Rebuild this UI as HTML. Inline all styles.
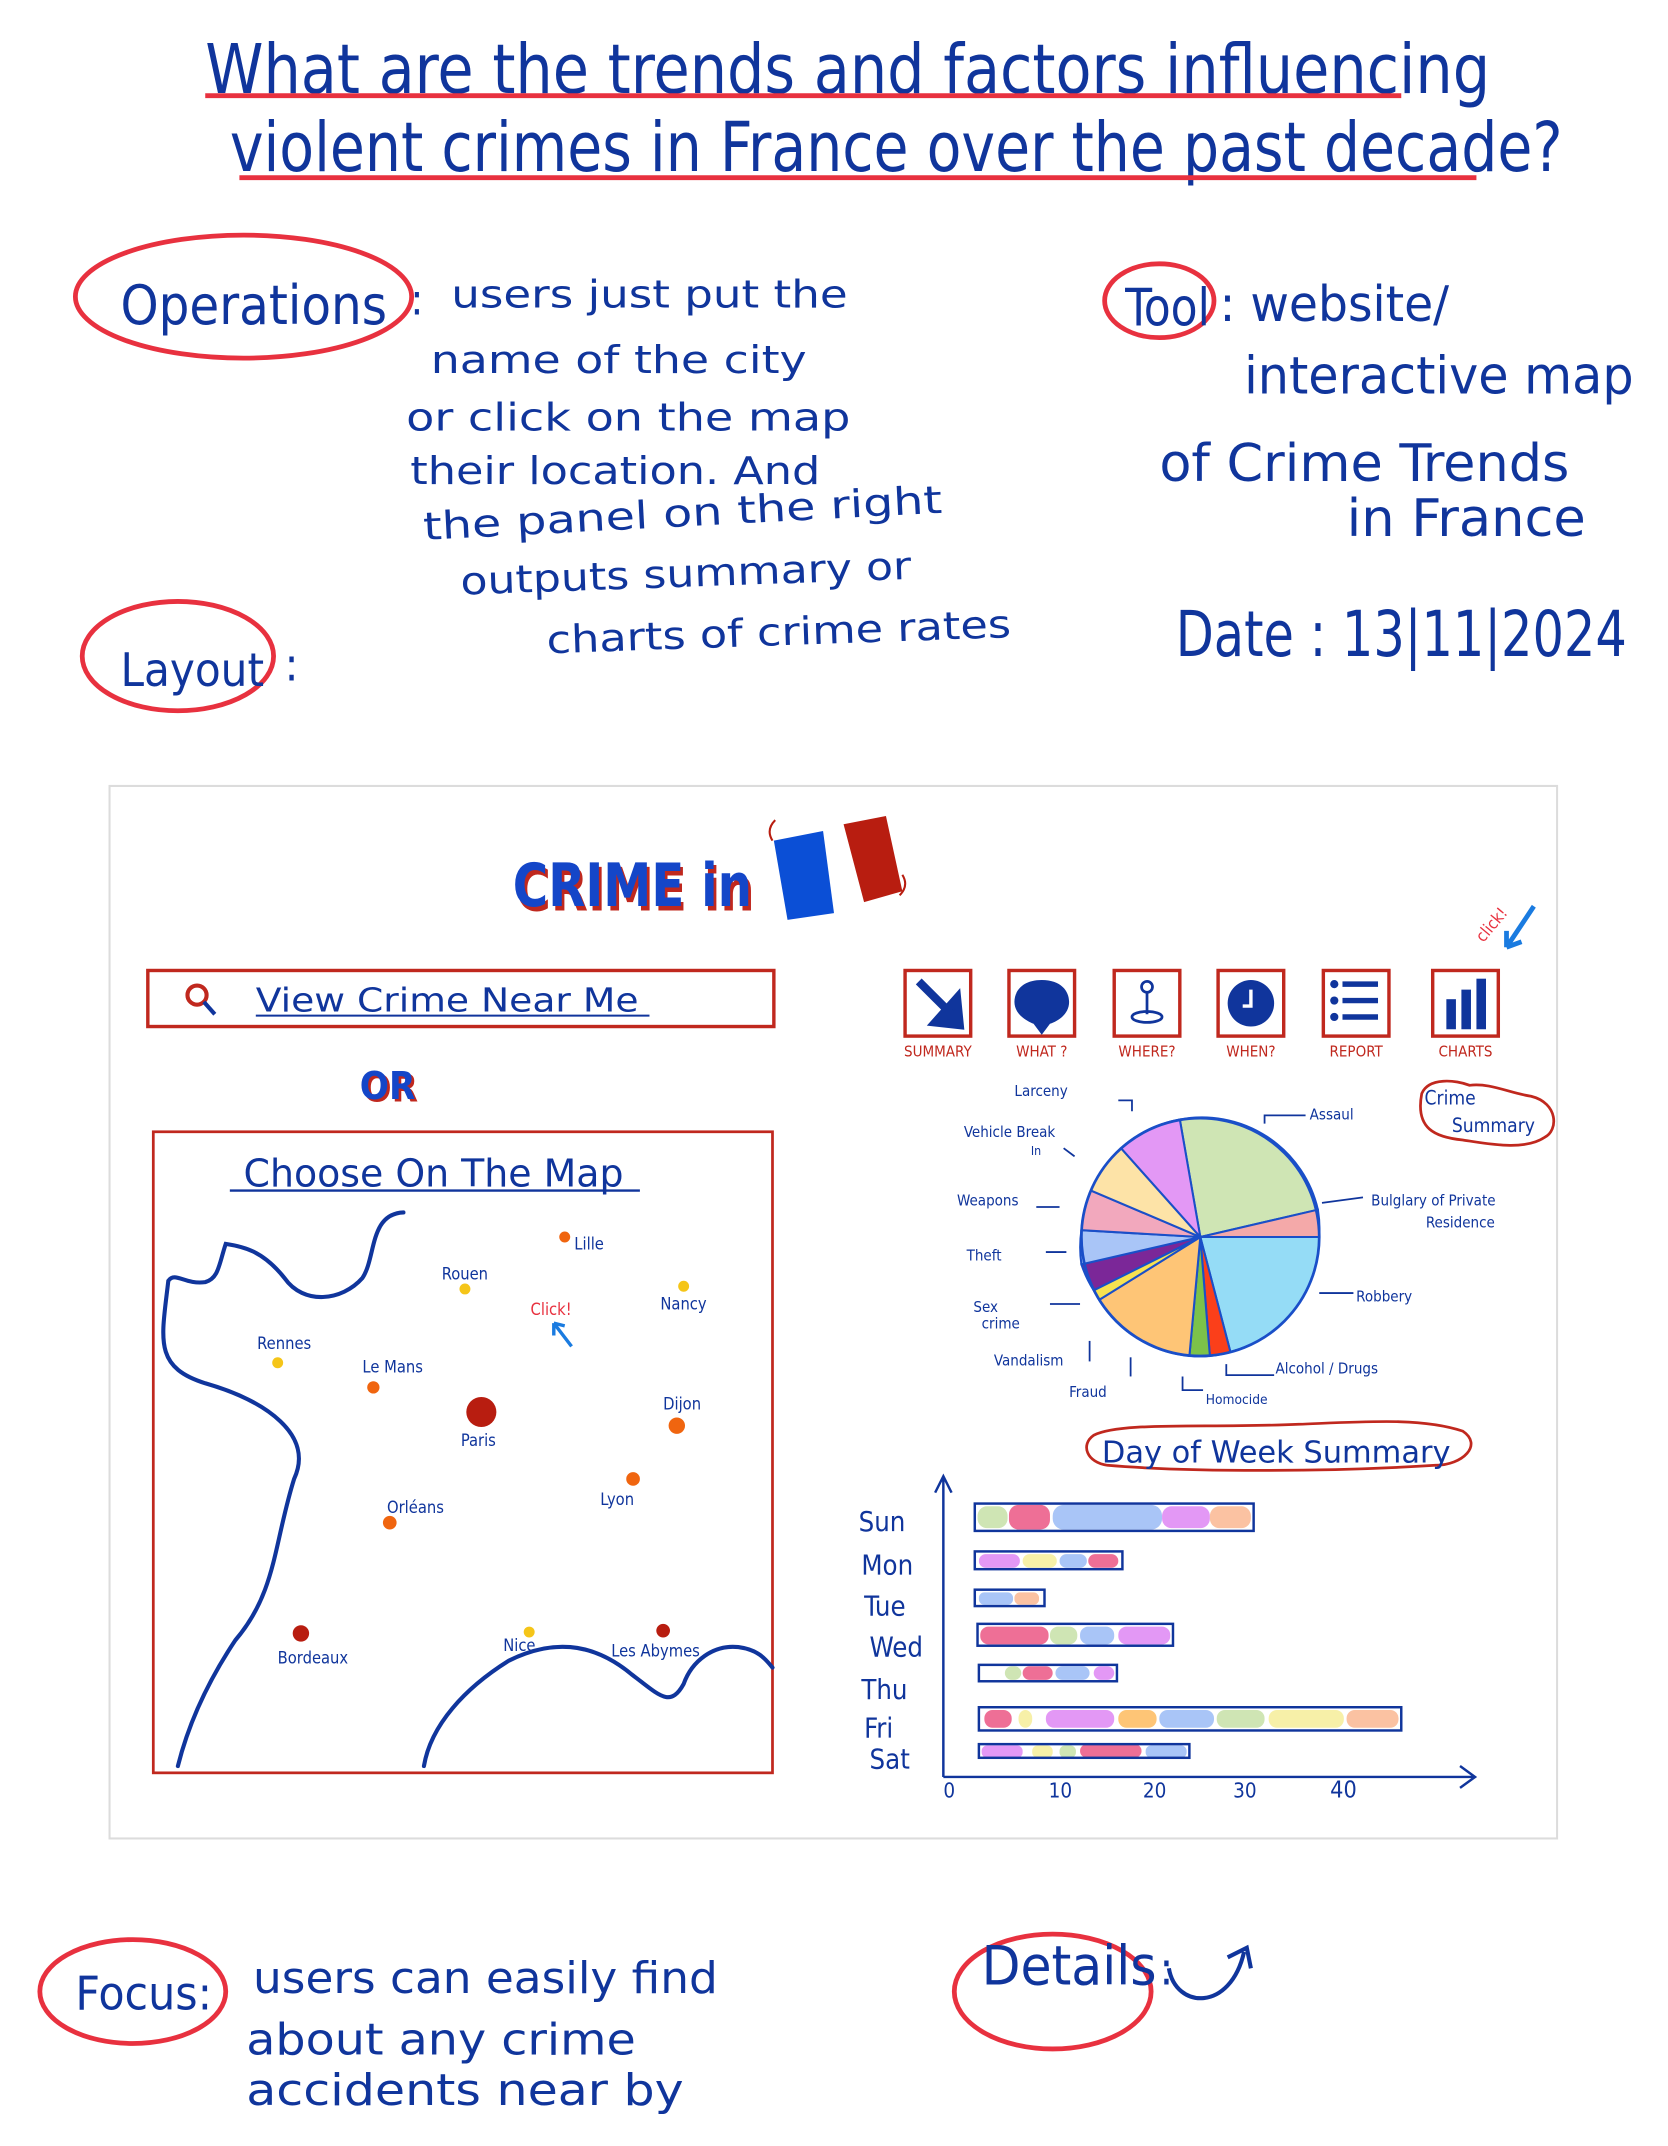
<!DOCTYPE html>
<html><head><meta charset="utf-8"><style>html,body{margin:0;padding:0;background:#fff}svg{display:block}</style></head>
<body>
<svg width="1668" height="2146" viewBox="0 0 1220 1570" xmlns="http://www.w3.org/2000/svg" font-family="'DejaVu Sans Condensed','Liberation Sans Narrow','Liberation Sans',sans-serif">
<g fill="#10359c">
<text x="150" y="68" font-size="50" textLength="940" lengthAdjust="spacingAndGlyphs">What are the trends and factors influencing</text>
<text x="168" y="125" font-size="50" textLength="975" lengthAdjust="spacingAndGlyphs">violent crimes in France over the past decade?</text>
</g>
<g stroke="#e8313f" stroke-width="3.5" fill="none">
<line x1="150" y1="70" x2="1025" y2="70"/><line x1="175" y1="130" x2="1080" y2="130"/>
<ellipse cx="178" cy="217" rx="123" ry="45"/>
<ellipse cx="848" cy="220" rx="40" ry="27"/>
<ellipse cx="130" cy="480" rx="70" ry="40"/>
<ellipse cx="97" cy="1457" rx="68" ry="38"/>
<ellipse cx="770" cy="1457" rx="72" ry="42"/>
</g>
<g fill="#10359c">
<text x="88" y="237" font-size="40" textLength="195" lengthAdjust="spacingAndGlyphs">Operations</text>
<text x="300" y="230" font-size="32">:</text>
<text x="330" y="225" font-size="28" textLength="290" lengthAdjust="spacingAndGlyphs">users just put the</text>
<text x="315" y="273" font-size="28" textLength="275" lengthAdjust="spacingAndGlyphs">name of the city</text>
<text x="297" y="315" font-size="28" textLength="325" lengthAdjust="spacingAndGlyphs">or click on the map</text>
<text x="300" y="354" font-size="28" textLength="300" lengthAdjust="spacingAndGlyphs">their location. And</text>
<text x="310" y="395" font-size="28" textLength="380" lengthAdjust="spacingAndGlyphs" transform="rotate(-3 310 395)">the panel on the right</text>
<text x="337" y="435" font-size="28" textLength="330" lengthAdjust="spacingAndGlyphs" transform="rotate(-2 337 435)">outputs summary or</text>
<text x="400" y="478" font-size="28" textLength="340" lengthAdjust="spacingAndGlyphs" transform="rotate(-2 400 478)">charts of crime rates</text>
<text x="823" y="238" font-size="38" textLength="62" lengthAdjust="spacingAndGlyphs">Tool</text>
<text x="892" y="235" font-size="36" textLength="168" lengthAdjust="spacingAndGlyphs">: website/</text>
<text x="910" y="288" font-size="38" textLength="285" lengthAdjust="spacingAndGlyphs">interactive map</text>
<text x="848" y="352" font-size="38" textLength="300" lengthAdjust="spacingAndGlyphs">of Crime Trends</text>
<text x="985" y="392" font-size="38" textLength="175" lengthAdjust="spacingAndGlyphs">in France</text>
<text x="860" y="480" font-size="46" textLength="330" lengthAdjust="spacingAndGlyphs">Date : 13|11|2024</text>
<text x="88" y="502" font-size="34" textLength="105" lengthAdjust="spacingAndGlyphs">Layout</text>
<text x="208" y="498" font-size="34">:</text>
</g>
<rect x="80" y="575" width="1059" height="770" fill="none" stroke="#dcdcdc" stroke-width="1.5"/>
<text x="377" y="666" font-size="44" font-weight="bold" fill="#c0281e" textLength="175" lengthAdjust="spacingAndGlyphs">CRIME in</text>
<text x="375" y="663" font-size="44" font-weight="bold" fill="#1446c8" textLength="175" lengthAdjust="spacingAndGlyphs">CRIME in</text>
<polygon points="566,615 602,608 610,668 576,673" fill="#0b4fd6"/>
<polygon points="617,603 648,597 660,652 632,660" fill="#b81d10"/>
<path d="M565,615 q-5,-8 2,-15 M660,640 q5,8 -2,15" stroke="#b81d10" stroke-width="1.5" fill="none"/>
<rect x="108" y="710" width="458" height="41" fill="none" stroke="#c0281e" stroke-width="2.5"/>
<circle cx="144" cy="728" r="7" fill="none" stroke="#c0281e" stroke-width="3"/>
<line x1="149" y1="733" x2="157" y2="742" stroke="#10359c" stroke-width="3"/>
<text x="187" y="740" font-size="24" fill="#10359c" textLength="280" lengthAdjust="spacingAndGlyphs">View Crime Near Me</text>
<line x1="187" y1="743" x2="475" y2="743" stroke="#10359c" stroke-width="1.5"/>
<text x="265" y="806" font-size="28" font-weight="bold" fill="#c0281e">OR</text>
<text x="263" y="804" font-size="28" font-weight="bold" fill="#1446c8">OR</text>
<rect x="112" y="828" width="453" height="469" fill="none" stroke="#c0281e" stroke-width="2"/>
<text x="178" y="868" font-size="28" fill="#10359c" textLength="278" lengthAdjust="spacingAndGlyphs">Choose On The Map</text>
<line x1="168" y1="871" x2="468" y2="871" stroke="#10359c" stroke-width="1.8"/>
<g stroke="#10359c" stroke-width="3" fill="none" stroke-linecap="round">
<path d="M295,887 C270,888 275,920 265,935 C250,952 222,955 208,935 C192,915 178,912 165,910 C160,925 160,935 150,938 C135,940 128,930 123,937 C118,980 112,1000 150,1012 C195,1025 230,1050 215,1082 C200,1130 202,1165 172,1200 C152,1230 138,1260 130,1292"/>
<path d="M310,1292 C315,1262 340,1235 372,1215 C402,1200 432,1200 462,1225 C482,1240 490,1250 500,1232 C506,1215 522,1203 540,1205 C555,1207 560,1214 565,1220"/>
</g>
<g font-size="12" fill="#10359c">
<circle cx="413" cy="905" r="4" fill="#f0650f"/><text x="420" y="914">Lille</text>
<circle cx="340" cy="943" r="4" fill="#f5c518"/><text x="323" y="936">Rouen</text>
<circle cx="500" cy="941" r="4" fill="#f5c518"/><text x="483" y="958">Nancy</text>
<circle cx="203" cy="997" r="4" fill="#f5c518"/><text x="188" y="987">Rennes</text>
<circle cx="273" cy="1015" r="4.5" fill="#f0650f"/><text x="265" y="1004">Le Mans</text>
<circle cx="352" cy="1033" r="11" fill="#b81d10"/><text x="337" y="1058">Paris</text>
<circle cx="495" cy="1043" r="6" fill="#f0650f"/><text x="485" y="1031">Dijon</text>
<circle cx="463" cy="1082" r="5" fill="#f0650f"/><text x="439" y="1101">Lyon</text>
<circle cx="285" cy="1114" r="5" fill="#f0650f"/><text x="283" y="1107">Orléans</text>
<circle cx="220" cy="1195" r="6" fill="#b81d10"/><text x="203" y="1217">Bordeaux</text>
<circle cx="387" cy="1194" r="4" fill="#f5c518"/><text x="368" y="1208">Nice</text>
<circle cx="485" cy="1193" r="5" fill="#b81d10"/><text x="447" y="1212">Les Abymes</text>
<text x="388" y="962" fill="#e8313f">Click!</text>
</g>
<path d="M418,985 L405,968 M405,968 l0,9 M405,968 l8,2" stroke="#1a7be0" stroke-width="2.5" fill="none"/>
<g stroke="#c0281e" stroke-width="2.5" fill="none">
<rect x="662" y="710" width="48" height="48"/><rect x="738" y="710" width="48" height="48"/><rect x="815" y="710" width="48" height="48"/>
<rect x="891" y="710" width="48" height="48"/><rect x="968" y="710" width="48" height="48"/><rect x="1048" y="710" width="48" height="48"/>
</g>
<g fill="#10359c" stroke="#10359c">
<path d="M672,718 L700,746 M700,730 L702,750 L684,748 Z" stroke-width="6"/>
<path d="M762,717 c-14,0 -20,8 -20,16 c0,9 9,14 14,16 l6,8 l6,-8 c6,-2 14,-7 14,-16 c0,-8 -6,-16 -20,-16z" stroke="none"/>
<circle cx="839" cy="722" r="4" fill="none" stroke-width="2"/><line x1="839" y1="726" x2="839" y2="742" stroke-width="2"/><ellipse cx="839" cy="744" rx="11" ry="4" fill="none" stroke-width="2"/>
<circle cx="915" cy="734" r="17" stroke="none"/><path d="M915,724 v12 h-6" stroke="#fff" stroke-width="2.5" fill="none"/>
<g stroke-width="4"><line x1="982" y1="720" x2="1008" y2="720"/><line x1="982" y1="732" x2="1008" y2="732"/><line x1="982" y1="744" x2="1008" y2="744"/></g>
<g stroke="none"><circle cx="976" cy="720" r="3"/><circle cx="976" cy="732" r="3"/><circle cx="976" cy="744" r="3"/>
<rect x="1058" y="731" width="7" height="22"/><rect x="1069" y="724" width="7" height="29"/><rect x="1080" y="716" width="7" height="37"/></g>
</g>
<g font-size="11" fill="#c0281e" text-anchor="middle">
<text x="686" y="773">SUMMARY</text><text x="762" y="773">WHAT ?</text><text x="839" y="773">WHERE?</text>
<text x="915" y="773">WHEN?</text><text x="992" y="773">REPORT</text><text x="1072" y="773">CHARTS</text>
</g>
<text x="1085" y="690" font-size="12" fill="#e8313f" transform="rotate(-50 1085 690)">click!</text>
<path d="M1122,663 L1102,693 M1102,693 l0,-12 M1102,693 l11,-4" stroke="#1a7be0" stroke-width="3.5" fill="none"/>
<g stroke="#1a4fc8" stroke-width="1.5" transform="translate(878 905)">
<path d="M0,0 L-15,-86 A87,87 0 0 1 86,-20 Z" fill="#cfe5b4"/>
<path d="M0,0 L86,-20 A87,87 0 0 1 87,0 Z" fill="#f4a9a9"/>
<path d="M0,0 L87,0 A87,87 0 0 1 22,84 Z" fill="#95dcf6"/>
<path d="M0,0 L22,84 A87,87 0 0 1 7,87 Z" fill="#fb3f1a"/>
<path d="M0,0 L7,87 A87,87 0 0 1 -8,87 Z" fill="#7cc24a"/>
<path d="M0,0 L-8,87 A87,87 0 0 1 -74,46 Z" fill="#fec576"/>
<path d="M0,0 L-74,46 A87,87 0 0 1 -78,39 Z" fill="#f7e250"/>
<path d="M0,0 L-78,39 A87,87 0 0 1 -87,20 Z" fill="#7b2798"/>
<path d="M0,0 L-87,20 A87,87 0 0 1 -87,-5 Z" fill="#a9c5f7"/>
<path d="M0,0 L-87,-5 A87,87 0 0 1 -80,-34 Z" fill="#f2a8bd"/>
<path d="M0,0 L-80,-34 A87,87 0 0 1 -58,-65 Z" fill="#fde3a7"/>
<path d="M0,0 L-58,-65 A87,87 0 0 1 -15,-86 Z" fill="#e398f5"/>
<circle r="87" fill="none" stroke-width="2"/>
</g>
<g stroke="#10359c" stroke-width="1.3" fill="none">
<path d="M818,805 h10 v8"/><path d="M925,822 v-6 h30"/><path d="M967,880 l30,-4"/><path d="M965,946 h25"/>
<path d="M897,998 v8 h35"/><path d="M865,1007 v10 h15"/><path d="M827,993 v14"/><path d="M797,981 v15"/>
<path d="M790,954 h-22"/><path d="M780,916 h-15"/><path d="M775,883 h-17"/><path d="M786,846 l-8,-6"/>
</g>
<g font-size="11" fill="#10359c">
<text x="742" y="802">Larceny</text><text x="705" y="832">Vehicle Break</text><text x="754" y="845" font-size="9">In</text>
<text x="958" y="819">Assaul</text><text x="1003" y="882">Bulglary of Private</text><text x="1043" y="898">Residence</text>
<text x="700" y="882">Weapons</text><text x="707" y="922">Theft</text><text x="712" y="960">Sex</text><text x="718" y="972">crime</text>
<text x="727" y="999">Vandalism</text><text x="782" y="1022">Fraud</text><text x="882" y="1027" font-size="10">Homocide</text>
<text x="992" y="952">Robbery</text><text x="933" y="1005">Alcohol / Drugs</text>
</g>
<path d="M1040,800 c5,-12 25,-10 35,-6 c15,-2 30,6 45,8 c20,5 20,25 10,30 c-15,10 -40,5 -60,2 c-20,-2 -35,-8 -30,-34z" fill="none" stroke="#c0281e" stroke-width="2"/>
<text x="1042" y="808" font-size="14" fill="#10359c">Crime</text><text x="1062" y="828" font-size="14" fill="#10359c">Summary</text>
<path d="M800,1050 c20,-10 80,-5 150,-8 c50,-2 90,-5 120,5 c15,10 0,25 -20,25 c-80,5 -180,5 -240,0 c-15,-2 -20,-15 -10,-22z" fill="none" stroke="#c0281e" stroke-width="2"/>
<text x="806" y="1070" font-size="22" fill="#10359c" textLength="255" lengthAdjust="spacingAndGlyphs">Day of Week Summary</text>
<g stroke="#10359c" stroke-width="1.8" fill="none">
<path d="M690,1300 V1080 M684,1092 L690,1080 L696,1092"/>
<path d="M690,1300 H1078 M1068,1292 L1079,1300 L1068,1308"/>
</g>
<g font-size="20" fill="#10359c">
<text x="628" y="1120">Sun</text><text x="630" y="1152">Mon</text><text x="632" y="1182">Tue</text><text x="636" y="1212">Wed</text>
<text x="630" y="1243">Thu</text><text x="632" y="1271">Fri</text><text x="636" y="1294">Sat</text>
<text x="690" y="1315" font-size="15">0</text><text x="767" y="1315" font-size="15">10</text><text x="836" y="1315" font-size="15">20</text><text x="902" y="1315" font-size="15">30</text><text x="973" y="1315" font-size="17">40</text>
</g>
<g>
<rect x="715" y="1102" width="22" height="16" rx="7" fill="#cfe5b4"/><rect x="738" y="1101" width="30" height="18" rx="7" fill="#ee6f96"/><rect x="770" y="1101" width="80" height="18" rx="8" fill="#a9c5f7"/><rect x="850" y="1102" width="35" height="16" rx="7" fill="#e398f5"/><rect x="885" y="1102" width="30" height="16" rx="7" fill="#fbc2a2"/>
<rect x="716" y="1137" width="30" height="10" rx="5" fill="#e398f5"/><rect x="748" y="1137" width="25" height="10" rx="5" fill="#f7f0a8"/><rect x="775" y="1137" width="20" height="10" rx="5" fill="#a9c5f7"/><rect x="796" y="1137" width="22" height="10" rx="5" fill="#ee6f96"/>
<rect x="716" y="1165" width="25" height="9" rx="4" fill="#a9c5f7"/><rect x="742" y="1165" width="18" height="9" rx="4" fill="#fbc2a2"/>
<rect x="717" y="1190" width="50" height="13" rx="6" fill="#ee6f96"/><rect x="768" y="1190" width="20" height="13" rx="6" fill="#cfe5b4"/><rect x="790" y="1190" width="25" height="13" rx="6" fill="#a9c5f7"/><rect x="818" y="1190" width="38" height="13" rx="6" fill="#e398f5"/>
<rect x="735" y="1219" width="12" height="10" rx="5" fill="#cfe5b4"/><rect x="748" y="1219" width="22" height="10" rx="5" fill="#ee6f96"/><rect x="772" y="1219" width="25" height="10" rx="5" fill="#a9c5f7"/><rect x="800" y="1219" width="15" height="10" rx="5" fill="#e398f5"/>
<rect x="720" y="1251" width="20" height="13" rx="6" fill="#ee6f96"/><rect x="745" y="1251" width="10" height="13" rx="6" fill="#f7f0a8"/><rect x="765" y="1251" width="50" height="13" rx="6" fill="#e398f5"/><rect x="818" y="1251" width="28" height="13" rx="6" fill="#fec576"/><rect x="848" y="1251" width="40" height="13" rx="6" fill="#a9c5f7"/><rect x="890" y="1251" width="35" height="13" rx="6" fill="#cfe5b4"/><rect x="928" y="1251" width="55" height="13" rx="6" fill="#f7f0a8"/><rect x="985" y="1251" width="38" height="13" rx="6" fill="#fbc2a2"/>
<rect x="718" y="1277" width="30" height="9" rx="4" fill="#e398f5"/><rect x="755" y="1277" width="15" height="9" rx="4" fill="#f7f0a8"/><rect x="775" y="1277" width="12" height="9" rx="4" fill="#cfe5b4"/><rect x="790" y="1276" width="45" height="10" rx="5" fill="#ee6f96"/><rect x="838" y="1277" width="30" height="9" rx="4" fill="#a9c5f7"/>
</g>
<g stroke="#10359c" stroke-width="1.8" fill="none">
<rect x="713" y="1100" width="204" height="20"/><rect x="713" y="1135" width="108" height="13"/><rect x="713" y="1163" width="51" height="12"/>
<rect x="715" y="1188" width="143" height="16"/><rect x="716" y="1218" width="101" height="12"/><rect x="716" y="1249" width="309" height="17"/><rect x="716" y="1276" width="154" height="10"/>
</g>
<g fill="#10359c">
<text x="55" y="1470" font-size="34" textLength="100" lengthAdjust="spacingAndGlyphs">Focus:</text>
<text x="185" y="1458" font-size="32" textLength="340" lengthAdjust="spacingAndGlyphs">users can easily find</text>
<text x="180" y="1503" font-size="32" textLength="285" lengthAdjust="spacingAndGlyphs">about any crime</text>
<text x="180" y="1540" font-size="32" textLength="320" lengthAdjust="spacingAndGlyphs">accidents near by</text>
<text x="718" y="1452" font-size="40" textLength="128" lengthAdjust="spacingAndGlyphs">Details</text>
<text x="848" y="1452" font-size="34">:</text>
</g>
<path d="M855,1440 C860,1470 900,1472 910,1428 M898,1432 L912,1425 L915,1440" stroke="#10359c" stroke-width="3" fill="none"/>
</svg>
</body></html>
